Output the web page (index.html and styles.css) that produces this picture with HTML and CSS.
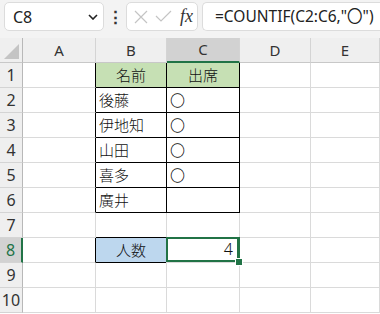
FILE: index.html
```html
<html>

<head>
    <meta charset="utf-8">
    <title>COUNTIF</title>
    <link rel="stylesheet" href="styles.css">
</head>

<body>
    <div class="toolbar">
        <div class="namebox">
            <span>C8</span>
            <svg class="chev" width="10" height="6" viewBox="0 0 10 6"><path d="M1 1 L5 5 L9 1" fill="none" stroke="#222" stroke-width="1.6"/></svg>
        </div>
        <div class="dots">&#8942;</div>
        <div class="btnbox">
            <svg width="14" height="14" viewBox="0 0 14 14"><path d="M1 1 L13 13 M13 1 L1 13" stroke="#c4c4c4" stroke-width="1.2"/></svg>
            <svg width="17" height="13" viewBox="0 0 17 13"><path d="M1 6 L6 11 L16 1" fill="none" stroke="#c4c4c4" stroke-width="1.2"/></svg>
            <span class="fx">fx</span>
        </div>
        <div class="formula">=COUNTIF(C2:C6,"〇")</div>
    </div>

    <div class="sheet">
        <div class="hd corner"><div class="tri"></div></div>
        <div class="hd">A</div>
        <div class="hd">B</div>
        <div class="hd colsel">C</div>
        <div class="hd">D</div>
        <div class="hd">E</div>

        <div class="rn">1</div>
        <div class="c tl"></div>
        <div class="c tb head ctr">名前</div>
        <div class="c tb head ctr">出席</div>
        <div class="c"></div>
        <div class="c"></div>

        <div class="rn">2</div>
        <div class="c tl"></div>
        <div class="c tb">後藤</div>
        <div class="c tb">〇</div>
        <div class="c"></div>
        <div class="c"></div>

        <div class="rn">3</div>
        <div class="c tl"></div>
        <div class="c tb">伊地知</div>
        <div class="c tb">〇</div>
        <div class="c"></div>
        <div class="c"></div>

        <div class="rn">4</div>
        <div class="c tl"></div>
        <div class="c tb">山田</div>
        <div class="c tb">〇</div>
        <div class="c"></div>
        <div class="c"></div>

        <div class="rn">5</div>
        <div class="c tl"></div>
        <div class="c tb">喜多</div>
        <div class="c tb">〇</div>
        <div class="c"></div>
        <div class="c"></div>

        <div class="rn">6</div>
        <div class="c tl"></div>
        <div class="c tb">廣井</div>
        <div class="c tb"></div>
        <div class="c"></div>
        <div class="c"></div>

        <div class="rn">7</div>
        <div class="c"></div>
        <div class="c tbot"></div>
        <div class="c"></div>
        <div class="c"></div>
        <div class="c"></div>

        <div class="rn rowsel">8</div>
        <div class="c tl"></div>
        <div class="c tb blue ctr">人数</div>
        <div class="c num sel">4<div class="handle"></div></div>
        <div class="c"></div>
        <div class="c"></div>

        <div class="rn">9</div>
        <div class="c"></div>
        <div class="c"></div>
        <div class="c"></div>
        <div class="c"></div>
        <div class="c"></div>

        <div class="rn">10</div>
        <div class="c"></div>
        <div class="c"></div>
        <div class="c"></div>
        <div class="c"></div>
        <div class="c"></div>
    </div>
</body>

</html>
```

FILE: styles.css
```css
html {
    padding: 0;
    margin: 0;
}

body {
    margin: 0;
    background-color: #ffffff;
    font-family: "Noto Sans", "Noto Sans CJK JP", sans-serif;
    overflow: hidden;
}

.toolbar {
    height: 38px;
    background-color: #f3f3f3;
    display: flex;
    align-items: flex-start;
    padding: 2px 0 0 4px;
    box-sizing: border-box;
    white-space: nowrap;
}

.namebox {
    width: 100px;
    height: 29px;
    box-sizing: border-box;
    background-color: #fff;
    border: 1px solid #dcdcdc;
    border-radius: 5px;
    display: flex;
    align-items: center;
    justify-content: space-between;
    padding: 0 5px 0 8px;
    font-size: 16px;
    color: #222;
}

.dots {
    width: 22px;
    text-align: center;
    font-size: 17px;
    line-height: 29px;
    color: #333;
    font-weight: bold;
}

.btnbox {
    width: 72px;
    height: 29px;
    box-sizing: border-box;
    background-color: #fff;
    border: 1px solid #dcdcdc;
    border-radius: 5px;
    display: flex;
    align-items: center;
    gap: 7px;
    padding-left: 7px;
}

.fx {
    font-family: "Liberation Serif", "DejaVu Serif", serif;
    font-style: italic;
    font-size: 18px;
    color: #333;
    margin-left: 1px;
}

.formula {
    flex: 1;
    margin-left: 4px;
    height: 29px;
    box-sizing: border-box;
    background-color: #fff;
    border: 1px solid #dcdcdc;
    border-right: none;
    border-radius: 5px 0 0 5px;
    padding-left: 12px;
    font-size: 15.5px;
    line-height: 27px;
    color: #222;
}

.sheet {
    display: grid;
    grid-template-columns: 23px 73px 71px 73px 71px 69px;
    grid-auto-rows: 25px;
}

.hd {
    background-color: #efefef;
    border-right: 1px solid #d4d4d4;
    border-bottom: 1px solid #c8c8c8;
    text-align: center;
    font-size: 15px;
    line-height: 24px;
    color: #333;
}

.corner {
    position: relative;
    border-right: 1px solid #b8b8b8;
}

.tri {
    position: absolute;
    right: 3px;
    bottom: 3px;
    width: 0;
    height: 0;
    border-left: 15px solid transparent;
    border-bottom: 15px solid #c4c4c4;
}

.colsel {
    background-color: #d2d2d2;
    border-bottom: 2px solid #217346;
    line-height: 23px;
}

.rn {
    background-color: #efefef;
    border-right: 1px solid #b8b8b8;
    border-bottom: 1px solid #d4d4d4;
    text-align: center;
    font-size: 16px;
    line-height: 24px;
    color: #333;
}

.rowsel {
    background-color: #d2d2d2;
    border-right: 2px solid #217346;
    color: #217346;
}

.c {
    border-right: 1px solid #dadada;
    border-bottom: 1px solid #dadada;
    font-family: "Noto Sans CJK JP", sans-serif;
    font-size: 15px;
    font-weight: 300;
    line-height: 24px;
    padding-left: 3px;
    color: #111;
    overflow: hidden;
}

.tl {
    border-right-color: #000;
}

.tb {
    border-right-color: #000;
    border-bottom-color: #000;
}

.tbot {
    border-bottom-color: #000;
}

.head {
    background-color: #c6e0b4;
}

.blue {
    background-color: #bdd7ee;
}

.ctr {
    text-align: center;
    padding-left: 0;
}

.num {
    text-align: right;
    padding-right: 6px;
    padding-left: 0;
    font-family: "Noto Sans", sans-serif;
    font-size: 16px;
}

.sel {
    position: relative;
    overflow: visible;
    border-right: 1px solid #217346;
    box-shadow: inset 0 0 0 2px #217346;
    margin: -1px 0 0 -1px;
}

.handle {
    position: absolute;
    right: -4px;
    bottom: -4px;
    width: 6px;
    height: 6px;
    background-color: #217346;
    border: 1px solid #fff;
}
```
